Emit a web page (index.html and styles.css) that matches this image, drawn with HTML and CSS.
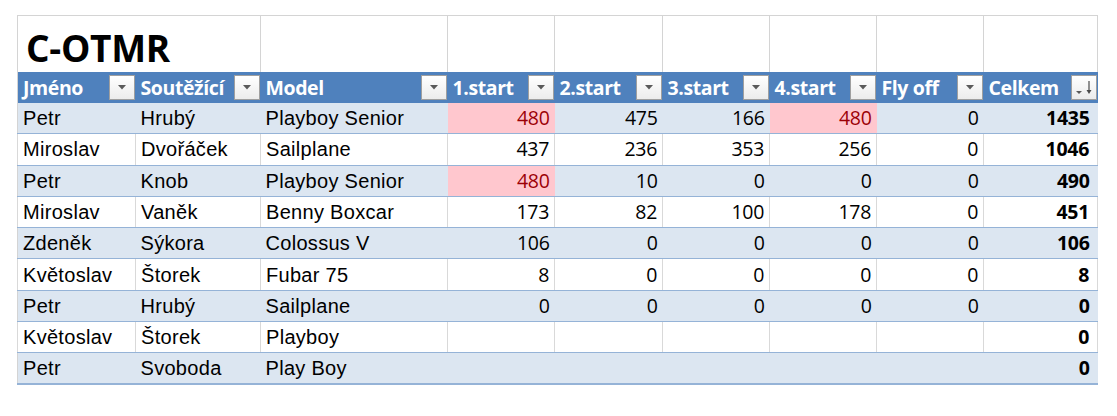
FILE: index.html
```html
<!DOCTYPE html>
<html lang="cs">
<head>
<meta charset="utf-8">
<title>C-OTMR</title>
<link rel="stylesheet" href="styles.css">
</head>
<body>
<table class="sheet">
  <colgroup>
    <col class="w-name"><col class="w-surname"><col class="w-model">
    <col class="w-s"><col class="w-s2"><col class="w-s"><col class="w-s"><col class="w-s"><col class="w-total">
  </colgroup>
  <tr class="title-row">
    <td class="title" colspan="2">C-OTMR</td>
    <td></td><td></td><td></td><td></td><td></td><td></td><td class="last"></td>
  </tr>
  <tr class="head">
    <th><div class="hd"><span>Jméno</span><span class="dd"><svg width="8" height="5" viewBox="0 0 8 5"><polygon points="0,0 8,0 4,4.5" fill="#5a5a5a"/></svg></span></div></th>
    <th><div class="hd"><span>Soutěžící</span><span class="dd"><svg width="8" height="5" viewBox="0 0 8 5"><polygon points="0,0 8,0 4,4.5" fill="#5a5a5a"/></svg></span></div></th>
    <th><div class="hd"><span>Model</span><span class="dd"><svg width="8" height="5" viewBox="0 0 8 5"><polygon points="0,0 8,0 4,4.5" fill="#5a5a5a"/></svg></span></div></th>
    <th><div class="hd"><span>1.start</span><span class="dd"><svg width="8" height="5" viewBox="0 0 8 5"><polygon points="0,0 8,0 4,4.5" fill="#5a5a5a"/></svg></span></div></th>
    <th><div class="hd"><span>2.start</span><span class="dd"><svg width="8" height="5" viewBox="0 0 8 5"><polygon points="0,0 8,0 4,4.5" fill="#5a5a5a"/></svg></span></div></th>
    <th><div class="hd"><span>3.start</span><span class="dd"><svg width="8" height="5" viewBox="0 0 8 5"><polygon points="0,0 8,0 4,4.5" fill="#5a5a5a"/></svg></span></div></th>
    <th><div class="hd"><span>4.start</span><span class="dd"><svg width="8" height="5" viewBox="0 0 8 5"><polygon points="0,0 8,0 4,4.5" fill="#5a5a5a"/></svg></span></div></th>
    <th><div class="hd"><span>Fly off</span><span class="dd"><svg width="8" height="5" viewBox="0 0 8 5"><polygon points="0,0 8,0 4,4.5" fill="#5a5a5a"/></svg></span></div></th>
    <th><div class="hd"><span>Celkem</span><span class="dd sort"><svg width="24" height="23" viewBox="0 0 24 23"><polygon points="4,15 10,15 7,18" fill="#5a5a5a"/><path d="M17 5 V16" stroke="#4a4a4a" stroke-width="1.2"/><polygon points="14.5,14 19.5,14 17,18" fill="#4a4a4a"/></svg></span></div></th>
  </tr>
  <tr class="band">
    <td>Petr</td><td>Hrubý</td><td>Playboy Senior</td>
    <td class="num hi">480</td><td class="num">475</td><td class="num">166</td><td class="num hi">480</td><td class="num">0</td><td class="num tot">1435</td>
  </tr>
  <tr class="plain">
    <td>Miroslav</td><td>Dvořáček</td><td>Sailplane</td>
    <td class="num">437</td><td class="num">236</td><td class="num">353</td><td class="num">256</td><td class="num">0</td><td class="num tot last">1046</td>
  </tr>
  <tr class="band">
    <td>Petr</td><td>Knob</td><td>Playboy Senior</td>
    <td class="num hi">480</td><td class="num">10</td><td class="num">0</td><td class="num">0</td><td class="num">0</td><td class="num tot">490</td>
  </tr>
  <tr class="plain">
    <td>Miroslav</td><td>Vaněk</td><td>Benny Boxcar</td>
    <td class="num">173</td><td class="num">82</td><td class="num">100</td><td class="num">178</td><td class="num">0</td><td class="num tot last">451</td>
  </tr>
  <tr class="band">
    <td>Zdeněk</td><td>Sýkora</td><td>Colossus V</td>
    <td class="num">106</td><td class="num">0</td><td class="num">0</td><td class="num">0</td><td class="num">0</td><td class="num tot">106</td>
  </tr>
  <tr class="plain">
    <td>Květoslav</td><td>Štorek</td><td>Fubar 75</td>
    <td class="num">8</td><td class="num">0</td><td class="num">0</td><td class="num">0</td><td class="num">0</td><td class="num tot last">8</td>
  </tr>
  <tr class="band">
    <td>Petr</td><td>Hrubý</td><td>Sailplane</td>
    <td class="num">0</td><td class="num">0</td><td class="num">0</td><td class="num">0</td><td class="num">0</td><td class="num tot">0</td>
  </tr>
  <tr class="plain">
    <td>Květoslav</td><td>Štorek</td><td>Playboy</td>
    <td></td><td></td><td></td><td></td><td></td><td class="num tot last">0</td>
  </tr>
  <tr class="band end">
    <td>Petr</td><td>Svoboda</td><td>Play Boy</td>
    <td></td><td></td><td></td><td></td><td></td><td class="num tot">0</td>
  </tr>
</table>
</body>
</html>
```

FILE: styles.css
```css
html, body {
  margin: 0;
  padding: 0;
  background: #ffffff;
}

.sheet {
  border-collapse: collapse;
  table-layout: fixed;
  width: 1080px;
  margin: 15px 0 0 17px;
  font-family: "Liberation Sans", Arial, sans-serif;
  font-size: 20px;
  letter-spacing: 0.3px;
  color: #000000;
}

.w-name { width: 118px; }
.w-surname { width: 125px; }
.w-model { width: 187px; }
.w-s { width: 107px; }
.w-s2 { width: 108px; }
.w-total { width: 114px; }

td, th {
  padding: 0 5px;
  white-space: nowrap;
  overflow: hidden;
  box-sizing: border-box;
}

/* title row */
.title-row td {
  height: 56px;
  border-top: 1px solid #d4d4d4;
  border-left: 1px solid #d4d4d4;
  background: #ffffff;
}
.title-row td.last {
  border-right: 1px solid #d4d4d4;
}
.title-row td.title {
  font-family: "Open Sans", sans-serif;
  font-weight: 700;
  font-size: 37px;
  letter-spacing: -0.3px;
  vertical-align: bottom;
  padding: 0 0 4px 8px;
  line-height: 40px;
  overflow: visible;
}

/* header row */
.head th {
  height: 31px;
  background: #4f81bd;
  color: #ffffff;
  font-family: "Open Sans", sans-serif;
  font-weight: 700;
  font-size: 19.5px;
  letter-spacing: -0.4px;
  line-height: 25px;
  text-align: left;
  padding: 0 1px 0 5px;
  border-left: 1px solid #d4d4d4;
}
.head th + th {
  border-left: none;
}
.hd {
  display: flex;
  justify-content: space-between;
  align-items: center;
}
.dd {
  flex: none;
  box-sizing: border-box;
  width: 26px;
  height: 25px;
  border: 1px solid #9f9f9f;
  background: linear-gradient(#ffffff, #ececec);
  display: flex;
  align-items: center;
  justify-content: center;
}
.dd svg {
  display: block;
}

/* data rows */
.band td, .plain td {
  height: 31.3px;
  padding-top: 0;
  padding-bottom: 0;
  border-bottom: 1px solid #95b3d7;
  line-height: 22px;
}
.band td {
  background: #dce6f1;
}
.band td:first-child {
  border-left: 1px solid #d4d4d4;
}
.plain td {
  background: #ffffff;
  border-left: 1px solid #d9d9d9;
}
.plain td.last {
  border-right: 1px solid #d9d9d9;
}
.band.end td {
  border-bottom: 2px solid #95b3d7;
}

.num {
  text-align: right;
  font-family: "Open Sans", sans-serif;
  font-size: 19.5px;
  letter-spacing: -0.3px;
  padding-right: 5px;
}
.tot {
  font-weight: 700;
  padding-right: 8px;
}
.band td.hi {
  background: #ffc7ce;
  color: #9c0006;
}
```
